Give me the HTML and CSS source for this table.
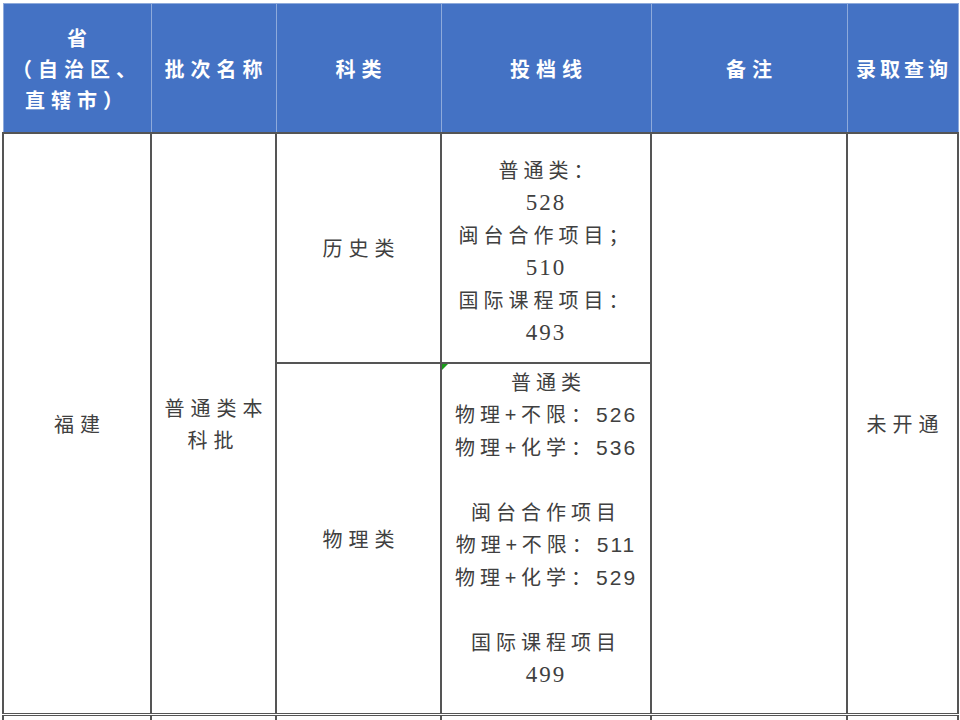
FILE: index.html
```html
<!DOCTYPE html>
<html lang="zh-CN">
<head>
<meta charset="utf-8">
<title>投档线</title>
<link rel="stylesheet" href="styles.css">
</head>
<body>
<table class="score-table">
  <colgroup>
    <col class="c-prov">
    <col class="c-batch">
    <col class="c-subject">
    <col class="c-line">
    <col class="c-note">
    <col class="c-query">
  </colgroup>
  <thead>
    <tr>
      <th>省<br>（自治区、<br>直辖市）</th>
      <th>批次名称</th>
      <th>科类</th>
      <th>投档线</th>
      <th>备注</th>
      <th class="tight">录取查询</th>
    </tr>
  </thead>
  <tbody>
    <tr class="row-hist">
      <td rowspan="2">福建</td>
      <td rowspan="2">普通类本<br>科批</td>
      <td>历史类</td>
      <td class="num shift">普通类：<br><span class="d">528</span><br>闽台合作项目；<br><span class="d">510</span><br>国际课程项目：<br><span class="d">493</span></td>
      <td rowspan="2"></td>
      <td rowspan="2">未开通</td>
    </tr>
    <tr class="row-phys">
      <td>物理类</td>
      <td class="num top flagged">普通类<br>物理+不限：<span class="s">526</span><br>物理+化学：<span class="s">536</span><br>&nbsp;<br>闽台合作项目<br>物理+不限：<span class="s">511</span><br>物理+化学：<span class="s">529</span><br>&nbsp;<br>国际课程项目<br><span class="d">499</span></td>
    </tr>
    <tr class="row-next">
      <td></td><td></td><td></td><td></td><td></td><td></td>
    </tr>
  </tbody>
</table>
</body>
</html>
```

FILE: styles.css
```css
html, body {
  margin: 0;
  background: #ffffff;
}
body {
  padding: 3px 0 0 2px;
  height: 717px;
  overflow: hidden;
}
.score-table {
  border-collapse: collapse;
  table-layout: fixed;
  width: 955px;
}
.c-prov { width: 148px; }
.c-batch { width: 125px; }
.c-subject { width: 165px; }
.c-line { width: 210px; }
.c-note { width: 196px; }
.c-query { width: 111px; }

.score-table th {
  height: 128px;
  padding: 0;
  background: #4472c4;
  color: #ffffff;
  border: 1px solid #8eaadb;
  font-family: "Noto Sans CJK SC", "Noto Sans", sans-serif;
  font-weight: bold;
  font-size: 20px;
  line-height: 31px;
  letter-spacing: 6px;
  text-indent: 6px;
  text-align: center;
  vertical-align: middle;
}
.score-table th.tight {
  letter-spacing: 4px;
  text-indent: 3px;
  white-space: nowrap;
}
.score-table td {
  padding: 0 2px;
  border: 2px solid #555555;
  color: #404040;
  font-family: "Noto Sans CJK SC", "Liberation Serif", serif;
  font-size: 20px;
  line-height: 32px;
  letter-spacing: 6px;
  text-indent: 6px;
  text-align: center;
  vertical-align: middle;
  white-space: nowrap;
}
.row-hist td { height: 222px; }
.row-phys td { height: 347px; }
.row-next td { height: 20px; border-top: 3px double #555555; }

.score-table td.num { letter-spacing: 5px; text-indent: 5px; }
.score-table td.shift { padding-top: 6px; }
.score-table td.top { vertical-align: top; padding-top: 2px; }
.d {
  font-family: "Liberation Serif", serif;
  font-size: 23px;
  letter-spacing: 2px;
}
.s {
  font-family: "Liberation Sans", sans-serif;
  font-size: 21px;
  letter-spacing: 2px;
}
.flagged { position: relative; }
.flagged::before {
  content: "";
  position: absolute;
  left: 0;
  top: 0;
  border-top: 6px solid #1a9b1a;
  border-right: 6px solid transparent;
}
```
